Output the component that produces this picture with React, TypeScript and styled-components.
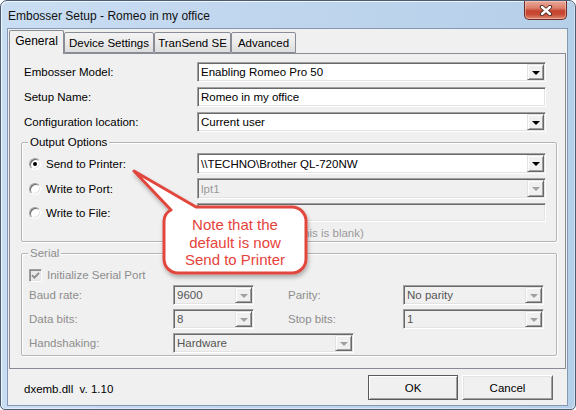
import React from 'react';
import styled, { createGlobalStyle } from 'styled-components';

const GlobalStyle = createGlobalStyle`
  html, body { margin: 0; padding: 0; background: #ffffff; }
  body { font-family: "Liberation Sans", Arial, sans-serif; font-size: 11px; }
  *, *::before, *::after { box-sizing: border-box; }
`;

const Window = styled.div`
  position: relative;
  width: 576px;
  height: 410px;
  border: 1px solid #4b5d75;
  border-radius: 7px 7px 5px 5px;
  background: linear-gradient(90deg, #cadef3 0%, #c0d6ee 45%, #b6cfe9 100%);
  box-shadow: inset 1px 1px 0 rgba(255, 255, 255, 0.75), inset -1px -1px 0 rgba(255, 255, 255, 0.45);
  display: flex;
  flex-direction: column;
  overflow: hidden;
`;

const TitleBar = styled.div`
  height: 27px;
  display: flex;
  justify-content: space-between;
  align-items: flex-start;
  flex-shrink: 0;
`;

const Title = styled.div`
  padding: 8px 0 0 7px;
  font-size: 12px;
  line-height: 15px;
  color: #111;
`;

const CloseButton = styled.div`
  width: 43px;
  height: 19px;
  margin-right: 8px;
  border: 1px solid #6b2e24;
  border-top: none;
  border-radius: 0 0 5px 5px;
  background: linear-gradient(180deg, #e9aa9b 0%, #dc7d69 40%, #c4432c 55%, #c94c35 75%, #e08a72 100%);
  box-shadow: inset 0 0 0 1px rgba(255, 220, 210, 0.45);
  display: flex;
  align-items: center;
  justify-content: center;
`;

const Client = styled.div`
  flex: 1;
  margin: 0 7px 3px 6px;
  border: 1px solid #8498b1;
  background: #f0f0f0;
  display: flex;
  flex-direction: column;
`;

const TabBar = styled.div`
  height: 24px;
  display: flex;
  align-items: flex-end;
  padding-left: 1px;
  position: relative;
  z-index: 1;
  flex-shrink: 0;
`;

const Tab = styled.div<{ $active?: boolean; $w: number }>`
  width: ${(p) => p.$w}px;
  height: ${(p) => (p.$active ? 24 : 21)}px;
  margin-bottom: ${(p) => (p.$active ? -1 : 0)}px;
  border: 1px solid #898c95;
  border-bottom: ${(p) => (p.$active ? 'none' : '1px solid #898c95')};
  border-radius: 2px 2px 0 0;
  background: ${(p) => (p.$active ? '#f0f0f0' : 'linear-gradient(180deg, #f3f3f3 0%, #ebebeb 50%, #dcdcdc 100%)')};
  display: flex;
  align-items: center;
  justify-content: center;
  padding-bottom: ${(p) => (p.$active ? 3 : 0)}px;
  font-size: ${(p) => (p.$active ? 12 : 11.5)}px;
  color: #000;
  white-space: nowrap;
`;

const Panel = styled.div`
  height: 316px;
  margin: 0 1px;
  border: 1px solid #898c95;
  background: #f0f0f0;
  padding: 8px 8px 0 11px;
  display: flex;
  flex-direction: column;
  flex-shrink: 0;
`;

const TopRows = styled.div`
  display: flex;
  flex-direction: column;
  gap: 5px;
`;

const FieldRow = styled.div`
  display: grid;
  grid-template-columns: 173px 349px;
  align-items: center;
  padding-left: 3px;
  height: 20px;
`;

const Label = styled.span<{ $disabled?: boolean }>`
  font-size: 11.5px;
  color: ${(p) => (p.$disabled ? '#8d8d8d' : '#000')};
  white-space: nowrap;
`;

const Sunken = styled.div<{ $h?: number; $disabled?: boolean; $w?: number }>`
  height: ${(p) => p.$h ?? 20}px;
  width: ${(p) => (p.$w ? `${p.$w}px` : '100%')};
  border: 1px solid;
  border-color: #a0a0a0 #ffffff #ffffff #a0a0a0;
  box-shadow: inset 1px 1px 0 #696969, inset -1px -1px 0 #e3e3e3;
  background: ${(p) => (p.$disabled ? '#f0f0f0' : '#ffffff')};
  display: flex;
  align-items: stretch;
  padding: 1px;
`;

const FieldText = styled.span<{ $tone?: 'normal' | 'dim' | 'faint' }>`
  flex: 1;
  display: flex;
  align-items: center;
  padding-left: 2px;
  font-size: 11.5px;
  color: ${(p) => (p.$tone === 'faint' ? '#9a9a9a' : p.$tone === 'dim' ? '#555555' : '#000')};
  white-space: nowrap;
  overflow: hidden;
`;

const DropButton = styled.span<{ $disabled?: boolean }>`
  width: 17px;
  border: 1px solid;
  border-color: #e3e3e3 #696969 #696969 #e3e3e3;
  box-shadow: inset 1px 1px 0 #ffffff, inset -1px -1px 0 #a0a0a0;
  background: #f0f0f0;
  display: flex;
  align-items: center;
  justify-content: center;
  &::after {
    content: '';
    width: 0;
    height: 0;
    border-left: 4px solid transparent;
    border-right: 4px solid transparent;
    border-top: 4px solid ${(p) => (p.$disabled ? '#a0a0a0' : '#000')};
    margin-top: 1px;
  }
`;

const Group = styled.div<{ $mt: number }>`
  margin-top: ${(p) => p.$mt}px;
  border: 1px solid #b4b4b4;
  border-radius: 2px;
  box-shadow: inset 1px 1px 0 #ffffff, 1px 1px 0 #ffffff;
  padding: 0 0 0 7px;
`;

const GroupTitle = styled.div<{ $disabled?: boolean }>`
  width: fit-content;
  margin: -8px 0 0 -1px;
  padding: 0 2px;
  background: #f0f0f0;
  line-height: 14px;
  font-size: 11.5px;
  color: ${(p) => (p.$disabled ? '#8d8d8d' : '#000')};
`;

const OptionGrid = styled.div`
  margin-top: 4px;
  display: grid;
  grid-template-columns: 168px 349px;
  grid-template-rows: 21px 21px 19px 14px;
  row-gap: 4px;
  align-items: center;
  padding-bottom: 1px;
`;

const RadioLabel = styled.label`
  display: flex;
  align-items: center;
  gap: 5px;
`;

const Radio = styled.span<{ $checked?: boolean }>`
  width: 12px;
  height: 12px;
  border-radius: 50%;
  border: 1px solid;
  border-color: #a0a0a0 #ffffff #ffffff #a0a0a0;
  box-shadow: inset 1px 1px 0 #696969, inset -1px -1px 0 #e3e3e3;
  background: #ffffff;
  display: inline-flex;
  align-items: center;
  justify-content: center;
  &::after {
    content: '';
    width: 4px;
    height: 4px;
    border-radius: 50%;
    background: #000;
    display: ${(p) => (p.$checked ? 'block' : 'none')};
  }
`;

const Hint = styled.span`
  grid-column: 2;
  justify-self: start;
  font-size: 11.5px;
  line-height: 14px;
  color: #9a9a9a;
  white-space: nowrap;
`;

const CheckRow = styled.label`
  margin-top: 8px;
  height: 14px;
  display: flex;
  align-items: center;
  gap: 5px;
`;

const CheckBox = styled.span`
  width: 13px;
  height: 13px;
  border: 1px solid;
  border-color: #a0a0a0 #ffffff #ffffff #a0a0a0;
  box-shadow: inset 1px 1px 0 #8c8c8c, inset -1px -1px 0 #e3e3e3;
  background: #e9e9e9;
  display: inline-flex;
  align-items: center;
  justify-content: center;
`;

const SerialGrid = styled.div`
  margin-top: 3px;
  display: grid;
  grid-template-columns: 144px 81px 34px 115px 141px;
  grid-auto-rows: 20px;
  row-gap: 4px;
  align-items: center;
  padding-bottom: 2px;
`;

const SerialLabel = styled(Label)<{ $col: number }>`
  grid-column: ${(p) => p.$col};
`;

const SerialCombo = styled(Sunken)<{ $col: string }>`
  grid-column: ${(p) => p.$col};
`;

const Footer = styled.div`
  flex: 1;
  display: flex;
  align-items: center;
  padding: 0 14px 0 16px;
`;

const Version = styled.span`
  font-size: 11.5px;
  color: #000;
  white-space: pre;
  padding-top: 3px;
`;

const ButtonRow = styled.div`
  margin-left: auto;
  display: flex;
  gap: 4px;
  padding-top: 1px;
`;

const Button = styled.button<{ $default?: boolean; $w: number }>`
  width: ${(p) => p.$w}px;
  height: 25px;
  padding: 0;
  font-family: "Liberation Sans", Arial, sans-serif;
  font-size: 11.5px;
  color: #000;
  background: #f0f0f0;
  border: 1px solid;
  border-color: ${(p) => (p.$default ? '#5a5a5a' : '#ffffff #696969 #696969 #ffffff')};
  box-shadow: ${(p) =>
    p.$default
      ? 'inset 1px 1px 0 #ffffff, inset -1px -1px 0 #a0a0a0'
      : 'inset 1px 1px 0 #e3e3e3, inset -1px -1px 0 #a0a0a0'};
`;

const Callout = styled.div`
  position: absolute;
  left: 125px;
  top: 165px;
  width: 190px;
  height: 116px;
  z-index: 5;
  pointer-events: none;
`;

const CalloutShape = styled.svg`
  position: absolute;
  inset: 0;
  overflow: visible;
`;

const CalloutText = styled.div`
  position: absolute;
  left: 38px;
  top: 42px;
  width: 142px;
  height: 66px;
  display: flex;
  flex-direction: column;
  align-items: center;
  justify-content: center;
  padding-top: 3px;
  font-family: "Liberation Sans", Arial, sans-serif;
  font-size: 15px;
  line-height: 17.5px;
  color: #e6433b;
  text-align: center;
`;

function Combo({ value, tone, disabled, w, h }: { value: string; tone?: 'normal' | 'dim' | 'faint'; disabled?: boolean; w?: number; h?: number }) {
  return (
    <Sunken $disabled={disabled} $w={w} $h={h}>
      <FieldText $tone={tone}>{value}</FieldText>
      <DropButton $disabled={disabled} />
    </Sunken>
  );
}

export default function App() {
  return (
    <>
      <GlobalStyle />
      <Window>
        <TitleBar>
          <Title>Embosser Setup - Romeo in my office</Title>
          <CloseButton>
            <svg width="14" height="11" viewBox="0 0 14 11">
              <path d="M3 2 L11 9 M11 2 L3 9" stroke="#4a2a24" strokeWidth="4.2" strokeLinecap="round" />
              <path d="M3 2 L11 9 M11 2 L3 9" stroke="#ffffff" strokeWidth="2.4" strokeLinecap="round" />
            </svg>
          </CloseButton>
        </TitleBar>
        <Client>
          <TabBar>
            <Tab $active $w={55}>General</Tab>
            <Tab $w={90}>Device Settings</Tab>
            <Tab $w={77}>TranSend SE</Tab>
            <Tab $w={65}>Advanced</Tab>
          </TabBar>
          <Panel>
            <TopRows>
              <FieldRow>
                <Label>Embosser Model:</Label>
                <Combo value="Enabling Romeo Pro 50" />
              </FieldRow>
              <FieldRow>
                <Label>Setup Name:</Label>
                <Sunken>
                  <FieldText>Romeo in my office</FieldText>
                </Sunken>
              </FieldRow>
              <FieldRow>
                <Label>Configuration location:</Label>
                <Combo value="Current user" />
              </FieldRow>
            </TopRows>

            <Group $mt={10}>
              <GroupTitle>Output Options</GroupTitle>
              <OptionGrid>
                <RadioLabel>
                  <Radio $checked />
                  <Label>Send to Printer:</Label>
                </RadioLabel>
                <Combo value="\\TECHNO\Brother QL-720NW" h={21} />
                <RadioLabel>
                  <Radio />
                  <Label>Write to Port:</Label>
                </RadioLabel>
                <Combo value="lpt1" tone="faint" disabled h={21} />
                <RadioLabel>
                  <Radio />
                  <Label>Write to File:</Label>
                </RadioLabel>
                <Sunken $disabled $h={19} />
                <Hint>(Uses default port if this is blank)</Hint>
              </OptionGrid>
            </Group>

            <Group $mt={11}>
              <GroupTitle $disabled>Serial</GroupTitle>
              <CheckRow>
                <CheckBox>
                  <svg width="9" height="9" viewBox="0 0 9 9">
                    <path d="M1 4.2 L3.4 6.6 L8 1.8" fill="none" stroke="#8a8a8a" strokeWidth="1.8" />
                  </svg>
                </CheckBox>
                <Label $disabled>Initialize Serial Port</Label>
              </CheckRow>
              <SerialGrid>
                <SerialLabel $disabled $col={1}>Baud rate:</SerialLabel>
                <SerialCombo $col="2" $disabled>
                  <FieldText $tone="dim">9600</FieldText>
                  <DropButton $disabled />
                </SerialCombo>
                <SerialLabel $disabled $col={4}>Parity:</SerialLabel>
                <SerialCombo $col="5" $disabled>
                  <FieldText $tone="dim">No parity</FieldText>
                  <DropButton $disabled />
                </SerialCombo>

                <SerialLabel $disabled $col={1}>Data bits:</SerialLabel>
                <SerialCombo $col="2" $disabled>
                  <FieldText $tone="dim">8</FieldText>
                  <DropButton $disabled />
                </SerialCombo>
                <SerialLabel $disabled $col={4}>Stop bits:</SerialLabel>
                <SerialCombo $col="5" $disabled>
                  <FieldText $tone="dim">1</FieldText>
                  <DropButton $disabled />
                </SerialCombo>

                <SerialLabel $disabled $col={1}>Handshaking:</SerialLabel>
                <SerialCombo $col="2 / span 3" $disabled $w={181}>
                  <FieldText $tone="dim">Hardware</FieldText>
                  <DropButton $disabled />
                </SerialCombo>
              </SerialGrid>
            </Group>
          </Panel>
          <Footer>
            <Version>{'dxemb.dll  v. 1.10'}</Version>
            <ButtonRow>
              <Button $default $w={90}>OK</Button>
              <Button $w={91}>Cancel</Button>
            </ButtonRow>
          </Footer>
        </Client>

        <Callout>
          <CalloutShape width="190" height="116" viewBox="0 0 190 116">
            <defs>
              <filter id="calloutShadow" x="-20%" y="-20%" width="140%" height="150%">
                <feDropShadow dx="1" dy="3" stdDeviation="2" floodColor="#000" floodOpacity="0.28" />
              </filter>
            </defs>
            <path
              d="M8 5 L70 41 H166 A14 14 0 0 1 180 55 V93 A14 14 0 0 1 166 107 H52 A14 14 0 0 1 38 93 V56 A13 13 0 0 1 45 44 Z"
              fill="#ffffff"
              stroke="#e2463d"
              strokeWidth="3"
              strokeLinejoin="round"
              filter="url(#calloutShadow)"
            />
          </CalloutShape>
          <CalloutText>
            <span>Note that the</span>
            <span>default is now</span>
            <span>Send to Printer</span>
          </CalloutText>
        </Callout>
      </Window>
    </>
  );
}
